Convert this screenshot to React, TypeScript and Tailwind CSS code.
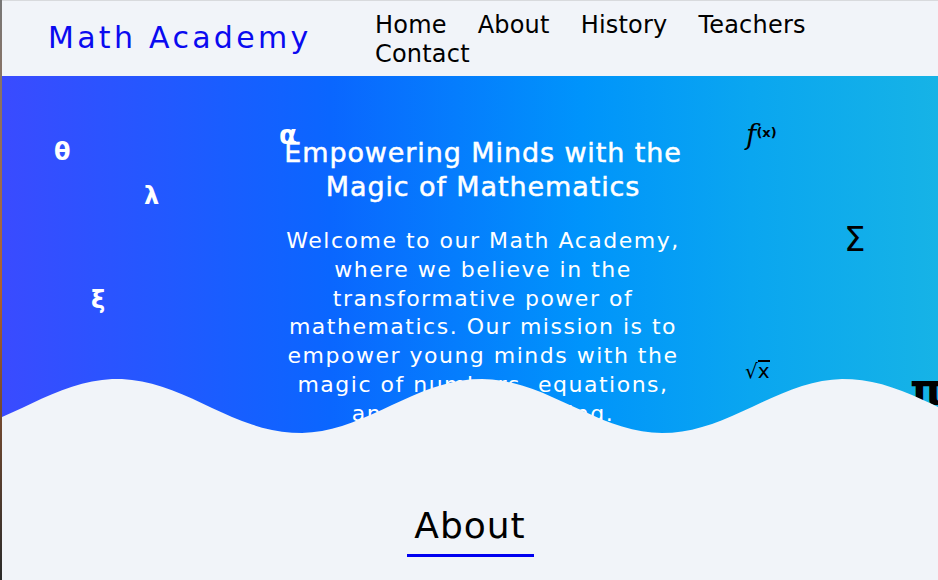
import React from 'react';

// wave along the bottom of the hero, same colour as the page
function Wave() {
  const pts: string[] = [];
  for (let x = 0; x <= 940; x += 10) {
    const y = 46 - 27 * Math.cos((2 * Math.PI * (x - 115)) / 364);
    pts.push(`${x},${y.toFixed(1)}`);
  }
  const d = `M0,80 L${pts.join(' L')} L940,80 Z`;
  return (
    <svg className="absolute left-0 bottom-0 w-[940px] h-[80px]" viewBox="0 0 940 80" preserveAspectRatio="none">
      <path d={d} fill="#f1f4f9" />
    </svg>
  );
}

const navItems = ['Home', 'About', 'History', 'Teachers', 'Contact'];

export default function App() {
  return (
    <div className="min-h-screen flex bg-[#f1f4f9] font-['DejaVu_Sans',sans-serif]">
      <div className="w-[2px] shrink-0 bg-gradient-to-b from-[#777] via-[#b0602a] to-[#2a2a2a]" />
      <div className="flex-1 flex flex-col overflow-hidden">
        {/* header */}
        <header className="h-[76px] shrink-0 flex items-center border-t border-[#d8dadd]">
          <div className="pl-[46px] w-[373px] shrink-0 text-[30px] tracking-[3.3px] text-[#0a0af0] pb-[2px]">
            Math Academy
          </div>
          <nav className="w-[460px] flex flex-wrap gap-x-[31px] text-[24px] leading-[29px] tracking-[0.2px] text-black mt-[2px]">
            {navItems.map(item => (
              <a key={item} href="#">{item}</a>
            ))}
          </nav>
        </header>

        {/* hero */}
        <section className="relative h-[364px] shrink-0 bg-[linear-gradient(90deg,#3a4bff_0%,#0a66ff_35%,#0094fb_62%,#0aa6f0_80%,#16b3e6_100%)]">
          <span className="absolute left-[52px] top-[58px] text-[24px] font-bold text-white">θ</span>
          <span className="absolute left-[142px] top-[102px] text-[24px] font-bold text-white">λ</span>
          <span className="absolute left-[89px] top-[206px] text-[24px] font-bold text-white">ξ</span>
          <span className="absolute left-[277px] top-[40px] text-[26px] font-bold text-white">α</span>
          <span className="absolute left-[744px] top-[38px] text-black">
            <span className="italic text-[28px] font-['DejaVu_Serif',serif]">f</span>
            <span className="text-[13px] font-bold align-[7px]">(x)</span>
          </span>
          <span className="absolute left-[842px] top-[138px] text-[34px] text-black">Σ</span>
          <span className="absolute left-[743px] top-[284px] flex text-[20px] leading-[22px] text-black">
            <span>√</span>
            <span className="border-t-2 border-black leading-[18px]">x</span>
          </span>
          <span className="absolute left-[908px] top-[282px] text-[42px] font-bold text-black">π</span>

          <div className="ml-[263px] w-[436px] pt-[60px] text-center text-white">
            <h1 className="text-[27px] leading-[34px] tracking-[0.9px] [-webkit-text-stroke:0.5px_white]">
              Empowering Minds with the
              <br />
              Magic of Mathematics
            </h1>
            <p className="mt-[23px] text-[22px] leading-[28.8px] tracking-[1.5px]">
              Welcome to our Math Academy,
              <br />
              where we believe in the
              <br />
              transformative power of
              <br />
              mathematics. Our mission is to
              <br />
              empower young minds with the
              <br />
              magic of numbers, equations,
              <br />
              and problem-solving.
            </p>
          </div>
          <Wave />
        </section>

        {/* about */}
        <section className="pt-[64px] flex flex-col items-center">
          <h2 className="text-[36px] leading-[44px] tracking-[1px] text-black">About</h2>
          <div className="mt-[6px] w-[127px] h-[3px] bg-[#0000f0]" />
        </section>
      </div>
    </div>
  );
}
